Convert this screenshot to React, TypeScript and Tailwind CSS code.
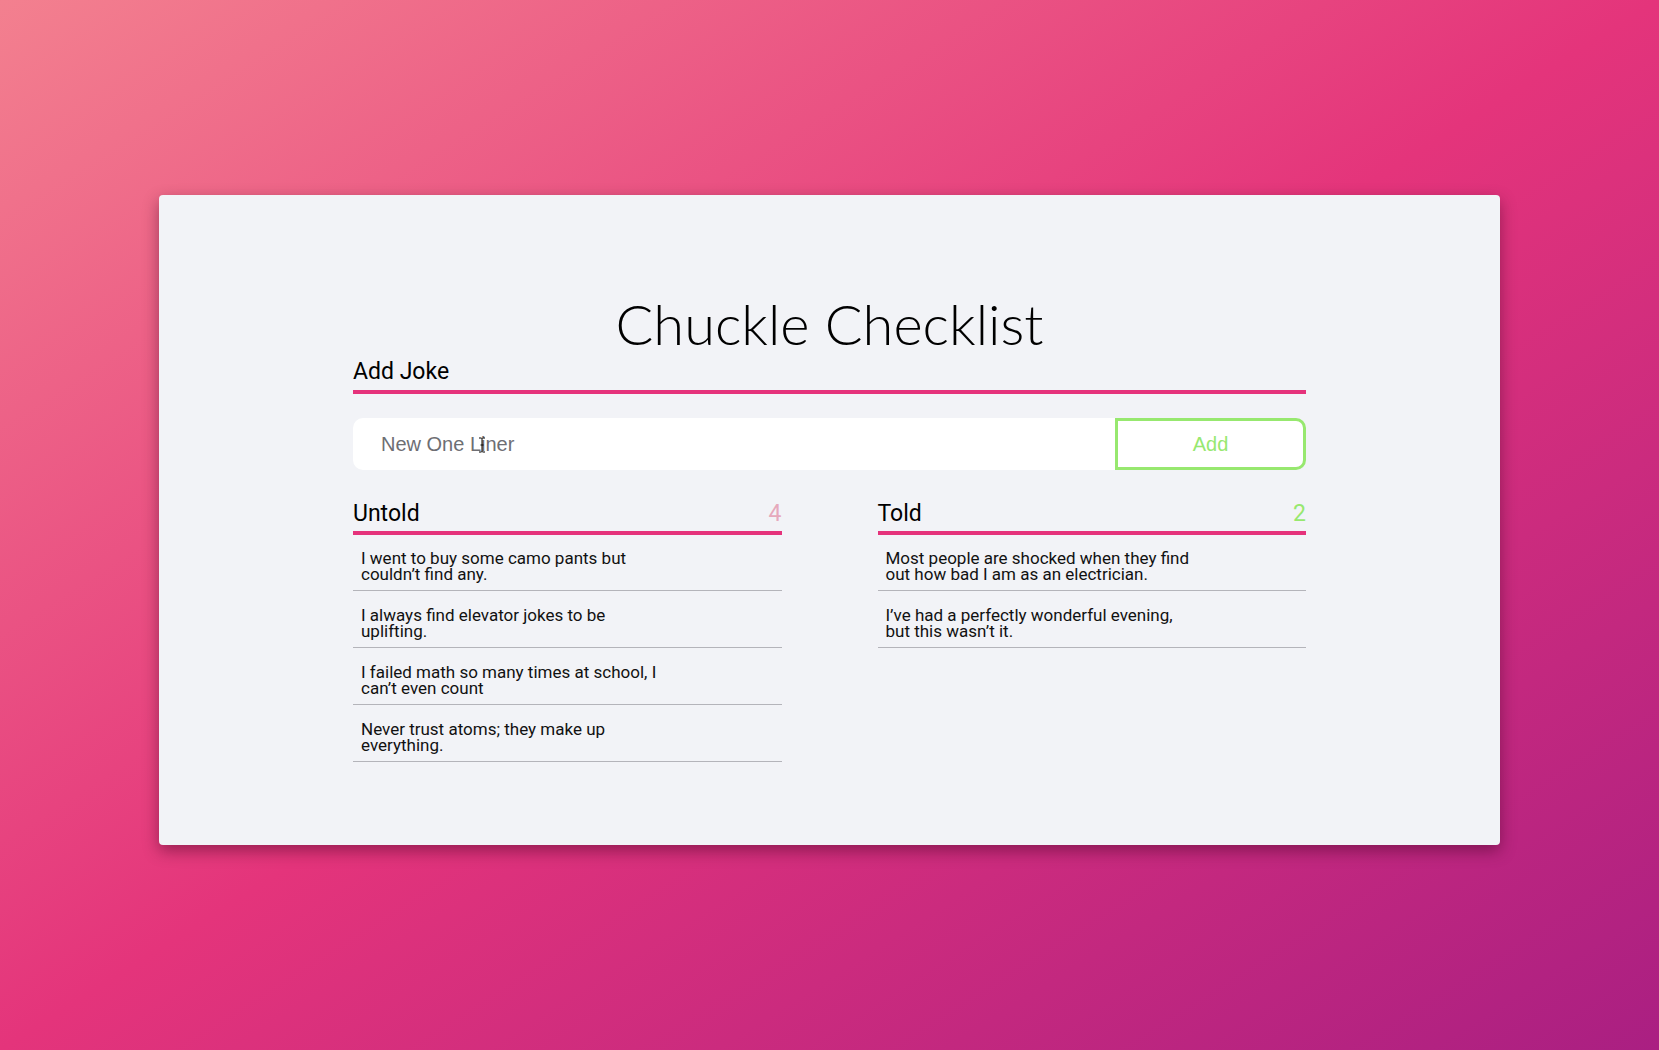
import { useState } from "react";

/***** DATA *****/
const untold = [
	"I went to buy some camo pants but couldn’t find any.",
	"I always find elevator jokes to be uplifting.",
	"I failed math so many times at school, I can’t even count",
	"Never trust atoms; they make up everything.",
];

const told = [
	"Most people are shocked when they find out how bad I am as an electrician.",
	"I’ve had a perfectly wonderful evening, but this wasn’t it.",
];

const JokeList = ({
	title,
	jokes,
	countClass,
}: {
	title: string;
	jokes: string[];
	countClass: string;
}) => (
	<div className="flex flex-col">
		<div className="flex items-baseline justify-between pb-[6px] border-b-4 border-[#e5327b]">
			<h2 className="text-[23px] leading-none text-black">{title}</h2>
			<span className={`text-[23px] leading-none ${countClass}`}>
				{jokes.length}
			</span>
		</div>
		<ul>
			{jokes.map((joke) => (
				<li
					key={joke}
					className="pt-4 first:pt-[15px] pb-2 pl-2 border-b border-[#b4b4ba] text-[17px] leading-4 text-[#111]"
				>
					<p className="max-w-[305px]">{joke}</p>
				</li>
			))}
		</ul>
	</div>
);

/**********************************************************************************************************
 *   COMPONENT START
 **********************************************************************************************************/
export default function App() {
	/***** STATE *****/
	const [text, setText] = useState("");

	/***** RENDER *****/
	return (
		<div className="min-h-screen w-full flex items-center justify-center pb-[10px] bg-[linear-gradient(to_bottom_right,#f3808f_0%,#e4347b_50%,#aa1f82_100%)] font-['Roboto',sans-serif]">
			<div className="w-[1341px] h-[650px] rounded bg-[#f2f3f7] shadow-[0_6px_16px_rgba(60,0,30,0.45)] pt-[101px]">
				<div className="w-[953px] mx-auto flex flex-col">
					<h1 className="text-center text-[56px] leading-none font-light text-black font-['Lato',sans-serif]">
						Chuckle Checklist
					</h1>
					<div className="mt-2 pb-[7px] border-b-4 border-[#e5327b]">
						<h2 className="text-[23px] leading-none text-black">Add Joke</h2>
					</div>
					<div className="relative mt-6 flex h-[52px]">
						<input
							value={text}
							onChange={(e) => setText(e.target.value)}
							placeholder="New One Liner"
							className="flex-1 h-full rounded-l-[10px] bg-white pl-7 text-[20px] text-[#333] placeholder:text-[#6e6e73] outline-none font-['Liberation_Sans',sans-serif]"
						/>
						<button
							type="button"
							className="w-[191px] h-full rounded-r-[10px] border-[3px] border-[#97e86f] bg-white text-[20px] text-[#97e86f] font-['Liberation_Sans',sans-serif]"
						>
							Add
						</button>
						<svg
							className="absolute left-[125px] top-[19px]"
							width="8"
							height="16"
							viewBox="0 0 8 16"
						>
							<path
								d="M1 1h2.5L4 1.5L4.5 1H7M4 1.5v13M1 15h2.5L4 14.5L4.5 15H7M2.5 8h3"
								stroke="#000"
								strokeWidth="1"
								fill="none"
							/>
						</svg>
					</div>
					<div className="mt-8 grid grid-cols-2 gap-x-24">
						<JokeList title="Untold" jokes={untold} countClass="text-[#e6a9bc]" />
						<JokeList title="Told" jokes={told} countClass="text-[#97e86f]" />
					</div>
				</div>
			</div>
		</div>
	);
}
